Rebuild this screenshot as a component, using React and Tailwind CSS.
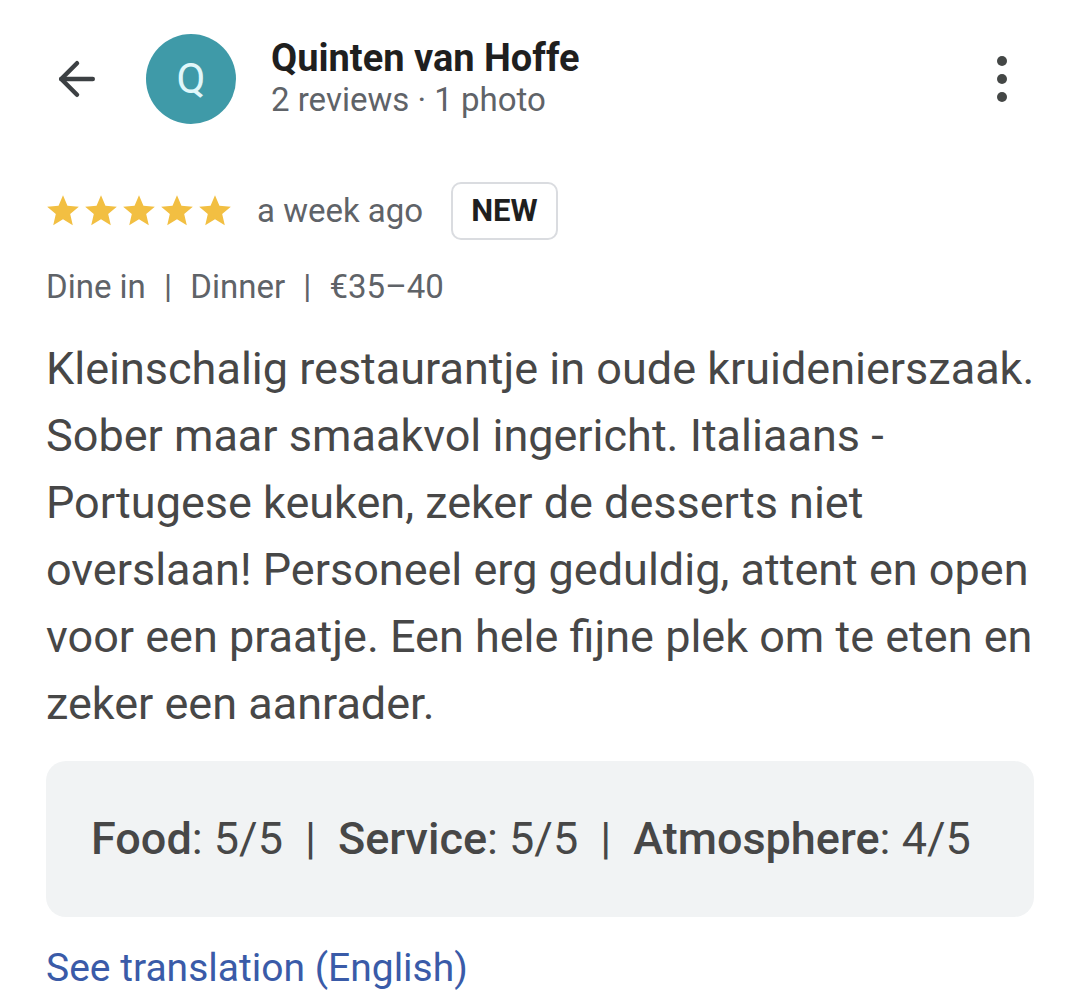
import { ArrowLeft } from 'lucide-react';

const font = { fontFamily: 'Roboto, "Noto Sans", sans-serif' };

function Star() {
  return (
    <svg viewBox="0 0 24 24" className="w-[38px] h-[38px]">
      <path
        fill="#f2bf42"
        d="M12 17.27L18.18 21l-1.64-7.03L22 9.24l-7.19-.61L12 2 9.19 8.63 2 9.24l5.46 4.73L5.82 21z"
      />
    </svg>
  );
}

export default function App() {
  return (
    <div className="w-[1080px] h-[1005px] bg-white overflow-hidden pl-[46px] pr-[46px]" style={font}>
      <div className="flex items-center h-[158px]">
        <ArrowLeft className="w-[54px] h-[54px] text-[#3c4043] ml-[4px]" strokeWidth={2} />
        <div className="ml-[42px] w-[90px] h-[90px] rounded-full bg-[#3f9aa8] flex items-center justify-center">
          <span className="text-[42px] text-[#e0f7fa] leading-none">Q</span>
        </div>
        <div className="ml-[35px] flex flex-col">
          <span className="text-[38px] font-bold text-[#1f1f1f] leading-[42px]">Quinten van Hoffe</span>
          <span className="text-[33px] text-[#5f6368] leading-[42px]">2 reviews · 1 photo</span>
        </div>
        <div className="ml-auto mr-[27px] flex flex-col gap-[8px] items-center">
          <span className="w-[10px] h-[10px] rounded-full bg-[#444746]" />
          <span className="w-[10px] h-[10px] rounded-full bg-[#444746]" />
          <span className="w-[10px] h-[10px] rounded-full bg-[#444746]" />
        </div>
      </div>

      <div className="flex items-center mt-[24px] h-[58px]">
        <div className="flex -ml-[2px]">
          <Star />
          <Star />
          <Star />
          <Star />
          <Star />
        </div>
        <span className="ml-[23px] text-[33px] text-[#5f6368]">a week ago</span>
        <span className="ml-[28px] h-[58px] px-[18px] flex items-center border-2 border-[#dadce0] rounded-[10px] text-[31px] font-bold text-[#1f1f1f]">
          NEW
        </span>
      </div>

      <div className="mt-[27px] text-[33px] text-[#5f6368] leading-[40px]">
        Dine in <span className="mx-[10px]">|</span> Dinner <span className="mx-[10px]">|</span> €35–40
      </div>

      <p className="mt-[28px] -mr-[40px] whitespace-nowrap text-[45px] text-[#474747] leading-[67px]">
        Kleinschalig restaurantje in oude kruidenierszaak.
        <br />
        Sober maar smaakvol ingericht. Italiaans -
        <br />
        Portugese keuken, zeker de desserts niet
        <br />
        overslaan! Personeel erg geduldig, attent en open
        <br />
        voor een praatje. Een hele fijne plek om te eten en
        <br />
        zeker een aanrader.
      </p>

      <div className="mt-[24px] w-[988px] h-[156px] rounded-[20px] bg-[#f1f3f4] flex items-center pl-[45px] text-[45px] text-[#474747]">
        <span>
          <span className="font-medium">Food</span>: 5/5
          <span className="mx-[22px]">|</span>
          <span className="font-medium">Service</span>: 5/5
          <span className="mx-[22px]">|</span>
          <span className="font-medium">Atmosphere</span>: 4/5
        </span>
      </div>

      <div className="mt-[28px] text-[39px] text-[#3a5ba8] leading-[46px]">See translation (English)</div>
    </div>
  );
}
